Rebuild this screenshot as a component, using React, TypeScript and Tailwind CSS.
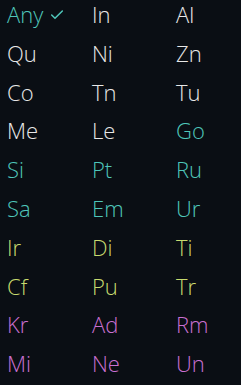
import { Check } from 'lucide-react'

type Tone = 'white' | 'teal' | 'lime' | 'pink'

const tones: Record<Tone, string> = {
  white: 'text-[#e8e8e8]',
  teal: 'text-[#4fc6ba]',
  lime: 'text-[#c8db6f]',
  pink: 'text-[#c970d1]',
}

const rows: [string, Tone][][] = [
  [['Any', 'teal'], ['In', 'white'], ['Al', 'white']],
  [['Qu', 'white'], ['Ni', 'white'], ['Zn', 'white']],
  [['Co', 'white'], ['Tn', 'white'], ['Tu', 'white']],
  [['Me', 'white'], ['Le', 'white'], ['Go', 'teal']],
  [['Si', 'teal'], ['Pt', 'teal'], ['Ru', 'teal']],
  [['Sa', 'teal'], ['Em', 'teal'], ['Ur', 'teal']],
  [['Ir', 'lime'], ['Di', 'lime'], ['Ti', 'lime']],
  [['Cf', 'lime'], ['Pu', 'lime'], ['Tr', 'lime']],
  [['Kr', 'pink'], ['Ad', 'pink'], ['Rm', 'pink']],
  [['Mi', 'pink'], ['Ne', 'pink'], ['Un', 'pink']],
]

export default function App() {
  return (
    <div className="h-[385px] w-[241px] overflow-hidden bg-[#0a0e14] font-['Open_Sans',sans-serif] font-[350]">
      <div className="mt-[-5px] pl-[7px]">
        {rows.map((row, i) => (
          <div key={i} className="grid h-[38.8px] grid-cols-[85px_84px_70px] items-center text-[22px] leading-[38.8px]">
            {row.map(([label, tone]) => (
              <div key={label} className={`flex items-center ${tones[tone]}`}>
                <span>{label}</span>
                {label === 'Any' && <Check size={16} strokeWidth={2.25} className="ml-[6px] mt-[2px]" />}
              </div>
            ))}
          </div>
        ))}
      </div>
    </div>
  )
}
